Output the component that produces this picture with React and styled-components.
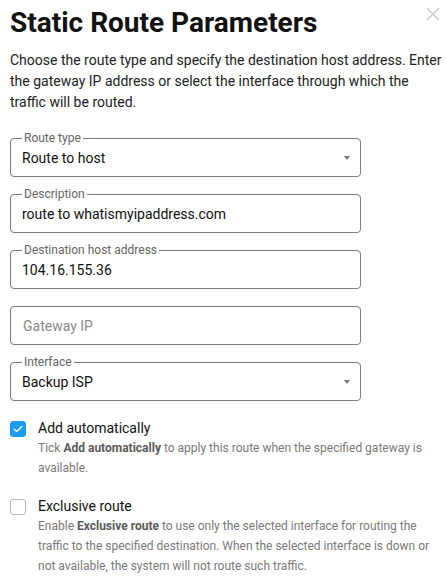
import React from 'react';
import styled, { createGlobalStyle } from 'styled-components';

const GlobalStyle = createGlobalStyle`
  body {
    margin: 0;
    background: #fff;
    font-family: Roboto, "Liberation Sans", Arial, sans-serif;
    color: #222;
  }
`;

const Dialog = styled.div`
  position: relative;
  width: 447px;
  box-sizing: border-box;
  padding: 6px 0 0 10px;
`;

const Title = styled.h2`
  margin: 0;
  font-size: 28px;
  line-height: 33px;
  font-weight: 700;
  color: #111;
`;

const CloseButton = styled.button`
  position: absolute;
  top: 7px;
  right: 7px;
  width: 14px;
  height: 14px;
  padding: 0;
  border: none;
  background: transparent;
  cursor: pointer;
  display: flex;
`;

const Intro = styled.p`
  margin: 11px 0 0 0;
  font-size: 14px;
  line-height: 21px;
  color: #222;
`;

const Fields = styled.div`
  display: flex;
  flex-direction: column;
  gap: 17px;
  margin-top: 25px;
  width: 351px;
`;

const FieldBox = styled.div`
  position: relative;
  height: 39px;
  box-sizing: border-box;
  border: 1px solid #7b7b7b;
  border-radius: 4px;
  display: flex;
  align-items: center;
  justify-content: space-between;
  padding: 0 10px 0 11px;
`;

const FieldLabel = styled.span`
  position: absolute;
  top: -8px;
  left: 11px;
  padding: 0 2px;
  background: #fff;
  font-size: 12px;
  line-height: 14px;
  color: #666;
`;

const FieldValue = styled.span`
  font-size: 14px;
  line-height: 20px;
  color: ${({ $placeholder }) => ($placeholder ? '#8a8a8a' : '#111')};
  margin-left: ${({ $placeholder }) => ($placeholder ? '1px' : '0')};
`;

const Caret = styled.span`
  width: 0;
  height: 0;
  border-left: 3px solid transparent;
  border-right: 3px solid transparent;
  border-top: 4px solid #777;
`;

const Options = styled.div`
  display: flex;
  flex-direction: column;
  gap: 18px;
  margin-top: 17px;
`;

const Option = styled.div`
  display: grid;
  grid-template-columns: 16px 1fr;
  column-gap: 12px;
`;

const Box = styled.span`
  width: 16px;
  height: 16px;
  box-sizing: border-box;
  margin-top: 3px;
  border-radius: 3px;
  display: flex;
  align-items: center;
  justify-content: center;
  background: ${({ $checked }) => ($checked ? '#1b9cf0' : '#fff')};
  border: 1px solid ${({ $checked }) => ($checked ? '#1b9cf0' : '#b9b9b9')};
`;

const OptionTitle = styled.div`
  font-size: 14px;
  line-height: 20px;
  color: #111;
`;

const Help = styled.div`
  grid-column: 2;
  width: 400px;
  font-size: 12px;
  line-height: 20px;
  color: #7a7a7a;

  b {
    font-weight: 700;
    color: #5a5a5a;
  }
`;

const Field = ({ label, value, placeholder, select }) => (
  <FieldBox>
    {label && <FieldLabel>{label}</FieldLabel>}
    <FieldValue $placeholder={!value}>{value || placeholder}</FieldValue>
    {select && <Caret />}
  </FieldBox>
);

const CheckOption = ({ checked, title, children }) => (
  <Option>
    <Box $checked={checked}>
      {checked && (
        <svg width="10" height="8" viewBox="0 0 10 8" fill="none">
          <path d="M1.2 4.2 L3.8 6.6 L8.8 1.4" stroke="#fff" strokeWidth="1.4" strokeLinecap="round" strokeLinejoin="round" />
        </svg>
      )}
    </Box>
    <OptionTitle>{title}</OptionTitle>
    <Help>{children}</Help>
  </Option>
);

const App = () => {
  return (
    <>
      <GlobalStyle />
      <Dialog>
        <Title>Static Route Parameters</Title>
        <CloseButton aria-label="Close">
          <svg width="14" height="14" viewBox="0 0 14 14">
            <path d="M1 1 L13 13 M13 1 L1 13" stroke="#cbcbcb" strokeWidth="1.5" />
          </svg>
        </CloseButton>
        <Intro>
          Choose the route type and specify the destination host address. Enter the gateway IP address or
          select the interface through which the traffic will be routed.
        </Intro>
        <Fields>
          <Field label="Route type" value="Route to host" select />
          <Field label="Description" value="route to whatismyipaddress.com" />
          <Field label="Destination host address" value="104.16.155.36" />
          <Field placeholder="Gateway IP" />
          <Field label="Interface" value="Backup ISP" select />
        </Fields>
        <Options>
          <CheckOption checked title="Add automatically">
            Tick <b>Add automatically</b> to apply this route when the specified gateway is available.
          </CheckOption>
          <CheckOption title="Exclusive route">
            Enable <b>Exclusive route</b> to use only the selected interface for routing the traffic to the
            specified destination. When the selected interface is down or not available, the system will not
            route such traffic.
          </CheckOption>
        </Options>
      </Dialog>
    </>
  );
};

export default App;
